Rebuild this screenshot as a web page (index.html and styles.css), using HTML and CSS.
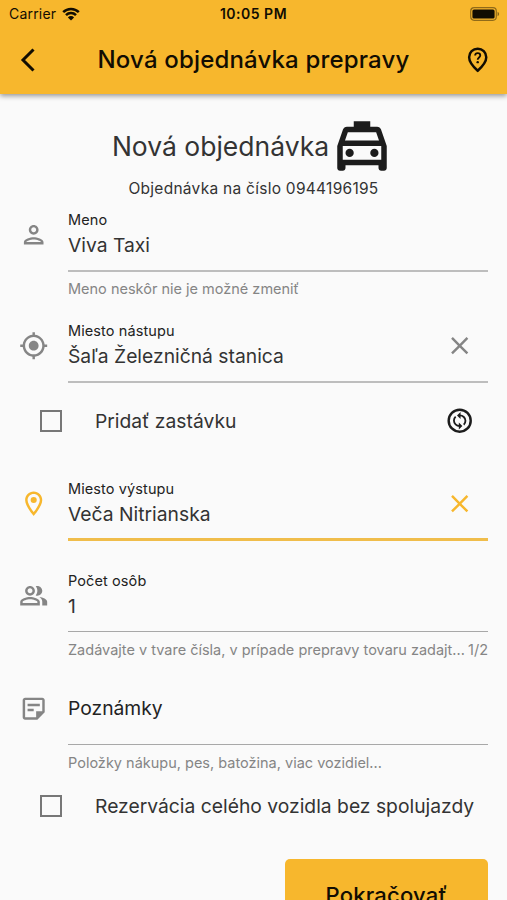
FILE: index.html
```html
<!DOCTYPE html>
<html lang="sk">
<head>
    <meta charset="UTF-8">
    <meta name="viewport" content="width=device-width, initial-scale=1.0">
    <title>Nová objednávka prepravy</title>
    <link rel="stylesheet" href="styles.css">
</head>
<body>
    <header class="app-header">
        <div class="status-bar">
            <div class="carrier">
                <span>Carrier</span>
                <svg class="wifi" viewBox="0 0 18 14">
                    <path d="M1.2 5.2a11 11 0 0 1 15.6 0M4 8.2a7 7 0 0 1 10 0" fill="none" stroke="currentColor" stroke-width="2.5"/>
                    <path d="M9 13.6L5.9 10.4a4.4 4.4 0 0 1 6.2 0z"/>
                </svg>
            </div>
            <span class="time">10:05 PM</span>
            <svg class="battery" viewBox="0 0 30 14">
                <rect x="0.7" y="0.7" width="25.6" height="12.6" rx="3.5" fill="none" stroke="currentColor" stroke-width="1.2" opacity="0.45"/>
                <rect x="2.4" y="2.4" width="22.2" height="9.2" rx="1.6"/>
                <path d="M27.6 4.8c2 .8 2 3.6 0 4.4z" opacity="0.5"/>
            </svg>
        </div>
        <div class="title-bar">
            <svg class="back" viewBox="0 0 16 24">
                <path d="M13.5 1.5L3 12l10.5 10.5" fill="none" stroke="currentColor" stroke-width="3"/>
            </svg>
            <h1>Nová objednávka prepravy</h1>
            <svg class="icon" viewBox="0 0 24 24">
                <path d="M12 3c-3.900 0-7 3-7 7 0 3.300 2.300 6.800 7 11 4.700-4.200 7-7.700 7-11 0-4-3.100-7-7-7z" fill="none" stroke="currentColor" stroke-width="2"/>
                <path d="M9.900 8.600c.1-1.200 1-1.900 2.100-1.900 1.200 0 2.100.8 2.100 1.900 0 1.600-2.100 1.700-2.100 3.500" fill="none" stroke="currentColor" stroke-width="1.5"/>
                <circle cx="12" cy="14" r="1"/>
            </svg>
        </div>
    </header>

    <main>
        <div class="heading">
            <h2>Nová objednávka</h2>
            <svg class="taxi" viewBox="0 0 24 24">
                <path d="M18.920 6.010C18.720 5.420 18.160 5 17.500 5H15V3H9v2H6.500c-.66 0-1.210.42-1.420 1.010L3 12v8c0 .55.45 1 1 1h1c.55 0 1-.45 1-1v-1h12v1c0 .55.45 1 1 1h1c.55 0 1-.45 1-1v-8l-2.080-5.990zM6.850 7h10.290l1.040 3H5.810l1.040-3zM19 17H5v-5h14v5z"/>
                <circle cx="7.500" cy="14.500" r="1.500"/>
                <circle cx="16.500" cy="14.500" r="1.500"/>
            </svg>
        </div>
        <p class="subtitle">Objednávka na číslo 0944196195</p>

        <form>
            <div class="field name">
                <svg class="icon" viewBox="0 0 24 24">
                    <path d="M12 6c1.100 0 2 .9 2 2s-.9 2-2 2-2-.9-2-2 .9-2 2-2m0 10c2.700 0 5.800 1.290 6 2H6c.23-.72 3.310-2 6-2m0-12C9.790 4 8 5.790 8 8s1.790 4 4 4 4-1.790 4-4-1.790-4-4-4zm0 10c-2.670 0-8 1.340-8 4v2h16v-2c0-2.660-5.330-4-8-4z"/>
                </svg>
                <div class="input">
                    <div class="texts">
                        <div class="label">Meno</div>
                        <div class="value">Viva Taxi</div>
                    </div>
                </div>
                <div class="helper"><span>Meno neskôr nie je možné zmeniť</span></div>
            </div>

            <div class="field pickup">
                <svg class="icon" viewBox="0 0 24 24">
                    <path d="M12 8c-2.210 0-4 1.790-4 4s1.790 4 4 4 4-1.790 4-4-1.790-4-4-4zm8.940 3c-.46-4.170-3.770-7.480-7.940-7.940V1h-2v2.060C6.830 3.520 3.520 6.830 3.060 11H1v2h2.060c.46 4.170 3.770 7.480 7.940 7.940V23h2v-2.060c4.170-.46 7.480-3.770 7.940-7.940H23v-2h-2.060zM12 19c-3.870 0-7-3.130-7-7s3.130-7 7-7 7 3.130 7 7-3.130 7-7 7z"/>
                </svg>
                <div class="input">
                    <div class="texts">
                        <div class="label">Miesto nástupu</div>
                        <div class="value">Šaľa Železničná stanica</div>
                    </div>
                    <svg class="icon" viewBox="0 0 24 24">
                        <path d="M19 6.410L17.590 5 12 10.590 6.410 5 5 6.410 10.590 12 5 17.590 6.410 19 12 13.410 17.590 19 19 17.590 13.410 12z"/>
                    </svg>
                </div>
            </div>

            <div class="check-row stop">
                <span class="checkbox"></span>
                <span class="check-label">Pridať zastávku</span>
                <svg class="icon" viewBox="0 0 24 24">
                    <g fill="none" stroke="currentColor">
                        <circle cx="12" cy="12" r="9" stroke-width="2"/>
                        <path d="M12 7.700c2.700 0 4.700 2 4.700 4.400 0 1.300-.5 2.400-1.400 3.200M12 16.300c-2.700 0-4.700-2-4.700-4.400 0-1.300.5-2.400 1.400-3.200" stroke-width="1.5"/>
                    </g>
                    <path d="M12.700 4.800v5.800L9.800 7.700zM11.300 13.400v5.800l2.900-2.900z"/>
                </svg>
            </div>

            <div class="field dropoff active">
                <svg class="icon" viewBox="0 0 24 24">
                    <path d="M12 2C8.130 2 5 5.130 5 9c0 5.250 7 13 7 13s7-7.750 7-13c0-3.870-3.130-7-7-7zM7 9c0-2.760 2.240-5 5-5s5 2.240 5 5c0 2.880-2.880 7.190-5 9.880C9.920 16.210 7 11.850 7 9z"/>
                    <circle cx="12" cy="9" r="2.500"/>
                </svg>
                <div class="input">
                    <div class="texts">
                        <div class="label">Miesto výstupu</div>
                        <div class="value">Veča Nitrianska</div>
                    </div>
                    <svg class="icon" viewBox="0 0 24 24">
                        <path d="M19 6.410L17.590 5 12 10.590 6.410 5 5 6.410 10.590 12 5 17.590 6.410 19 12 13.410 17.590 19 19 17.590 13.410 12z"/>
                    </svg>
                </div>
            </div>

            <div class="field persons">
                <svg class="icon" viewBox="0 0 24 24">
                    <path d="M16.670 13.130C18.040 14.060 19 15.320 19 17v3h4v-3c0-2.180-3.570-3.470-6.330-3.870z"/>
                    <path d="M15 12c2.210 0 4-1.790 4-4s-1.790-4-4-4c-.47 0-.91.1-1.330.24C14.500 5.270 15 6.580 15 8s-.5 2.730-1.330 3.760c.42.14.86.24 1.330.24z"/>
                    <path d="M9 12c2.210 0 4-1.790 4-4s-1.790-4-4-4-4 1.790-4 4 1.790 4 4 4zm0-6c1.100 0 2 .9 2 2s-.9 2-2 2-2-.9-2-2 .9-2 2-2zM9 13c-2.670 0-8 1.340-8 4v3h16v-3c0-2.660-5.330-4-8-4zm6 5H3v-.99C3.200 16.290 6.300 15 9 15s5.800 1.290 6 2v1z"/>
                </svg>
                <div class="input">
                    <div class="texts">
                        <div class="label">Počet osôb</div>
                        <div class="value">1</div>
                    </div>
                </div>
                <div class="helper">
                    <span>Zadávajte v tvare čísla, v prípade prepravy tovaru zadajt...</span>
                    <span class="counter">1/2</span>
                </div>
            </div>

            <div class="field notes">
                <svg class="icon" viewBox="0 0 24 24">
                    <path d="M19 3H5c-1.100 0-2 .9-2 2v14c0 1.100.9 2 2 2h10l6-6V5c0-1.100-.9-2-2-2zM5 19V5h14v9h-5v5H5zM7 8h10v2H7zM7 12h5v2H7z"/>
                </svg>
                <div class="input">
                    <div class="placeholder">Poznámky</div>
                </div>
                <div class="helper"><span>Položky nákupu, pes, batožina, viac vozidiel...</span></div>
            </div>

            <div class="check-row reserve">
                <span class="checkbox"></span>
                <span class="check-label">Rezervácia celého vozidla bez spolujazdy</span>
            </div>

            <button type="button">Pokračovať</button>
        </form>
    </main>
</body>
</html>
```
FILE: styles.css
```css
* {
    box-sizing: border-box;
}
body {
    margin: 0;
    height: 900px;
    overflow: hidden;
    background-color: #fafafa;
    color: #333;
    font-family: Inter, sans-serif;
}
h1, h2, p {
    margin: 0;
}
svg {
    display: block;
    fill: currentColor;
    flex-shrink: 0;
}
.icon {
    width: 29.4px;
    height: 29.4px;
}

/* header */
.app-header {
    height: 94px;
    background-color: #f7b72d;
    color: #120d02;
    box-shadow: 0 2px 5px rgba(0, 0, 0, 0.4);
}
.status-bar {
    display: grid;
    grid-template-columns: 1fr auto 1fr;
    align-items: center;
    height: 27px;
    padding: 0 7px;
    font-size: 14px;
}
.carrier {
    display: flex;
    align-items: center;
    gap: 6px;
    padding-left: 2px;
    letter-spacing: 0.2px;
}
.wifi {
    width: 18px;
    height: 14px;
}
.time {
    font-weight: 600;
    letter-spacing: 0.5px;
}
.battery {
    width: 30px;
    height: 14px;
    justify-self: end;
}
.title-bar {
    display: grid;
    grid-template-columns: 1fr auto 1fr;
    align-items: center;
    height: 65px;
    padding: 0 15px;
}
.back {
    width: 16px;
    height: 24px;
    margin-left: 5px;
}
.title-bar .icon {
    justify-self: end;
}
.title-bar h1 {
    font-size: 24px;
    font-weight: 500;
    letter-spacing: 0.17px;
}

/* heading */
.heading {
    display: flex;
    align-items: center;
    justify-content: center;
    height: 66px;
    margin-top: 19px;
}
.heading h2 {
    font-size: 26.5px;
    font-weight: 400;
}
.taxi {
    width: 66px;
    height: 66px;
    color: #1c1c1c;
}
.subtitle {
    height: 20px;
    text-align: center;
    font-size: 15.5px;
    line-height: 20px;
    letter-spacing: 0.27px;
}

/* form */
form {
    display: flex;
    flex-direction: column;
    padding-right: 19px;
}
.field {
    display: grid;
    grid-template-columns: 68px 1fr;
    color: #858585;
}
.field > .icon {
    margin: 9px 0 0 19px;
}
.input {
    display: flex;
    justify-content: space-between;
    height: 61px;
    border-bottom: 2px solid #bdbdbd;
}
.input .icon {
    margin: 9px 14px 0 0;
}
.label {
    font-size: 14.5px;
    line-height: 18px;
    letter-spacing: 0.1px;
    color: #222;
}
.value {
    margin-top: 3px;
    font-size: 19.3px;
    line-height: 26px;
    color: #333;
}
.placeholder {
    font-size: 19.3px;
    line-height: 26px;
    color: #222;
}
.helper {
    grid-column: 2;
    display: flex;
    justify-content: space-between;
    margin-top: 8px;
    font-size: 14.5px;
    line-height: 18px;
    white-space: nowrap;
}
.name {
    margin-top: 12px;
}
.pickup {
    margin-top: 24px;
}
.active {
    color: #f7b72d;
}
.active .input {
    border-bottom: 3px solid #f0bd4b;
}
.dropoff {
    margin-top: 44px;
}
.persons {
    margin-top: 31px;
}
.persons .input {
    height: 60px;
    border-bottom-width: 1px;
    border-bottom-color: #a8a8a8;
}
.persons .helper {
    margin-top: 9px;
}
.notes {
    margin-top: 36px;
}
.notes > .icon {
    margin-top: -1px;
}
.notes .input {
    height: 50px;
    border-bottom-width: 1px;
    border-bottom-color: #a8a8a8;
}
.notes .helper {
    margin-top: 9px;
}
.check-row {
    display: flex;
    align-items: center;
    height: 30px;
    padding-left: 40px;
}
.checkbox {
    flex-shrink: 0;
    width: 22px;
    height: 22px;
    border: 2px solid #777;
}
.check-label {
    flex: 1;
    margin-left: 33px;
    font-size: 19.3px;
    white-space: nowrap;
}
.check-row .icon {
    margin-right: 14px;
    color: #1c1c1c;
}
.stop {
    margin-top: 23px;
}
.reserve {
    margin-top: 19px;
}
button {
    align-self: flex-end;
    width: 203px;
    height: 71px;
    margin-top: 38px;
    padding: 0;
    border: none;
    border-radius: 5px;
    background-color: #f7b72d;
    color: #120d02;
    font-family: inherit;
    font-size: 22px;
    font-weight: 500;
    letter-spacing: 0.2px;
}
```
